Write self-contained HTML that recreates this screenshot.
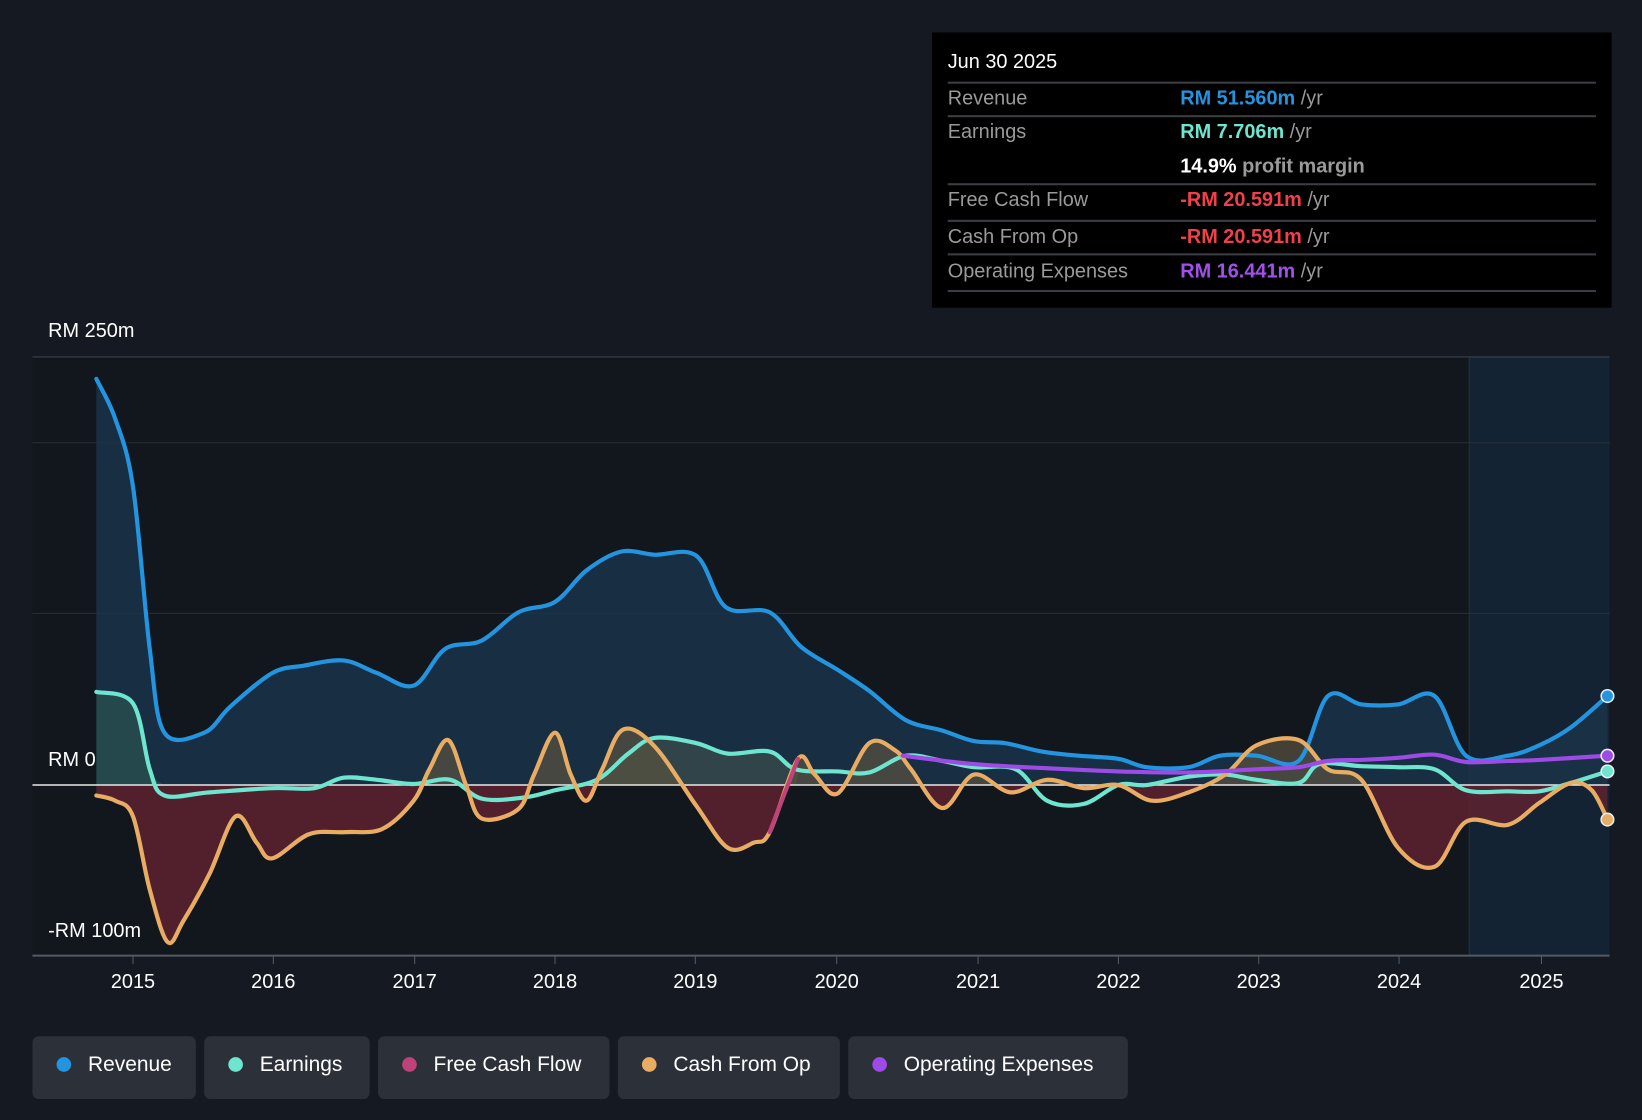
<!DOCTYPE html>
<html><head><meta charset="utf-8">
<style>
html,body{margin:0;padding:0;background:#151a22;width:1642px;height:1120px;overflow:hidden}
#w{position:absolute;left:0;top:0;width:1568px;height:1070px;transform:scale(1.0472,1.0467);transform-origin:0 0;font-family:"Liberation Sans",sans-serif;color:#fff}
.lbl{position:absolute;font-size:19px;color:#fff}
.tick{position:absolute;top:928px;font-size:19px;width:80px;text-align:center}
#tt{position:absolute;left:890px;top:31px;width:649px;height:263px;background:#000}
.r{position:absolute;left:15px;width:619px;font-size:19px;color:#9a9a9a}
.v{position:absolute;left:222px;top:0;color:#9a9a9a;white-space:nowrap}
.ln{position:absolute;left:15px;width:619px;height:2px;background:#3a3d42}
.pill{position:absolute;top:990px;height:60px;background:#2c3039;border-radius:6px;font-size:20px;line-height:54px}
.pill i{position:absolute;left:23px;top:20px;width:14px;height:14px;border-radius:50%}
.pill span{position:absolute;left:53px}
</style></head><body><div id="w">
<svg width="1568" height="1070" style="position:absolute;left:0;top:0">
<defs>
<clipPath id="above"><rect x="0" y="0" width="1568" height="750"/></clipPath>
<clipPath id="below"><rect x="0" y="750" width="1568" height="300"/></clipPath>
</defs>
<rect x="31" y="341" width="1506" height="572" fill="#12161d"/>
<rect x="1403" y="341" width="134" height="572" fill="#142333"/>
<line x1="1403" y1="341" x2="1403" y2="913" stroke="#22303e" stroke-width="1"/>
<line x1="31" y1="341" x2="1537" y2="341" stroke="#3b4048" stroke-width="1"/>
<line x1="31" y1="423" x2="1537" y2="423" stroke="#2a2f37" stroke-width="1"/>
<line x1="31" y1="586" x2="1537" y2="586" stroke="#2a2f37" stroke-width="1"/>
<path class="sf" fill="#1a3249" fill-opacity="0.85" data-p="92,362 110,400 127,465 143,620 157,700 195,700 220,675 260,643 290,636 328,631 360,643 395,655 425,620 460,612 495,585 530,575 560,545 593,527 625,530 665,531 693,580 735,585 765,618 800,640 830,660 865,688 900,698 930,708 960,710 995,718 1030,722 1068,725 1095,733 1135,733 1165,722 1200,722 1240,727 1268,665 1300,673 1335,673 1370,665 1400,722 1440,722 1470,712 1500,695 1535,665"/>
<path class="sf" fill="#2f5a55" fill-opacity="0.6" data-p="92,661 127,672 143,735 157,750"/>
<path class="sf" fill="#4a5a50" fill-opacity="0.5" data-p="570,750 600,720 625,705 665,710 695,720 735,718 760,735 760,750"/>
<g clip-path="url(#above)"><path class="sf" fill="#5a5340" fill-opacity="0.7" data-p="92,760 110,765 127,780 143,850 160,900 175,880 200,835 225,780 245,805 260,820 295,797 330,795 365,792 395,765 410,735 428,707 445,750 460,782 495,773 510,740 530,700 545,740 560,765 575,735 595,697 625,713 665,770 695,810 720,805 735,795 762,725 778,740 800,758 830,710 855,717 870,735 900,772 930,740 965,757 1000,745 1035,753 1068,750 1100,765 1135,757 1170,740 1200,712 1240,707 1268,735 1300,745 1335,810 1370,828 1400,785 1440,788 1470,767 1500,748 1520,755 1535,783"/></g>
<g clip-path="url(#below)"><path class="sf" fill="#5e2230" fill-opacity="0.85" data-p="92,760 110,765 127,780 143,850 160,900 175,880 200,835 225,780 245,805 260,820 295,797 330,795 365,792 395,765 410,735 428,707 445,750 460,782 495,773 510,740 530,700 545,740 560,765 575,735 595,697 625,713 665,770 695,810 720,805 735,795 762,725 778,740 800,758 830,710 855,717 870,735 900,772 930,740 965,757 1000,745 1035,753 1068,750 1100,765 1135,757 1170,740 1200,712 1240,707 1268,735 1300,745 1335,810 1370,828 1400,785 1440,788 1470,767 1500,748 1520,755 1535,783"/></g>
<line x1="31" y1="750" x2="1537" y2="750" stroke="#e8e8e8" stroke-width="1.5"/>
<line x1="31" y1="913" x2="1537" y2="913" stroke="#555a62" stroke-width="2"/>
<g stroke="#555a62" stroke-width="1">
<line x1="127" y1="913" x2="127" y2="921"/><line x1="261" y1="913" x2="261" y2="921"/><line x1="396" y1="913" x2="396" y2="921"/><line x1="530" y1="913" x2="530" y2="921"/><line x1="664" y1="913" x2="664" y2="921"/><line x1="799" y1="913" x2="799" y2="921"/><line x1="934" y1="913" x2="934" y2="921"/><line x1="1068" y1="913" x2="1068" y2="921"/><line x1="1202" y1="913" x2="1202" y2="921"/><line x1="1336" y1="913" x2="1336" y2="921"/><line x1="1472" y1="913" x2="1472" y2="921"/>
</g>
<g fill="none" stroke-width="4" stroke-linejoin="round" stroke-linecap="round">
<path class="s" stroke="#2394df" data-p="92,362 110,400 127,465 143,620 157,700 195,700 220,675 260,643 290,636 328,631 360,643 395,655 425,620 460,612 495,585 530,575 560,545 593,527 625,530 665,531 693,580 735,585 765,618 800,640 830,660 865,688 900,698 930,708 960,710 995,718 1030,722 1068,725 1095,733 1135,733 1165,722 1200,722 1240,727 1268,665 1300,673 1335,673 1370,665 1400,722 1440,722 1470,712 1500,695 1535,665"/>
<path class="s" stroke="#6ee5cf" data-p="92,661 127,672 143,735 157,760 200,757 260,753 300,753 328,743 360,745 395,749 430,745 460,763 500,762 530,755 570,745 600,720 625,705 665,710 695,720 735,718 760,735 800,737 830,738 865,722 900,727 930,733 970,735 1000,765 1035,768 1068,750 1095,750 1135,742 1170,740 1200,745 1240,748 1260,730 1300,732 1335,733 1370,735 1400,755 1440,756 1470,756 1500,748 1535,737"/>
<path class="s" stroke="#e8ad63" data-p="92,760 110,765 127,780 143,850 160,900 175,880 200,835 225,780 245,805 260,820 295,797 330,795 365,792 395,765 410,735 428,707 445,750 460,782 495,773 510,740 530,700 545,740 560,765 575,735 595,697 625,713 665,770 695,810 720,805 735,795 762,725 778,740 800,758 830,710 855,717 870,735 900,772 930,740 965,757 1000,745 1035,753 1068,750 1100,765 1135,757 1170,740 1200,712 1240,707 1268,735 1300,745 1335,810 1370,828 1400,785 1440,788 1470,767 1500,748 1520,755 1535,783"/>
<path stroke="#c0427a" d="M735,795 L762,725"/>
<path class="s" stroke="#9d4ae6" data-p="862,722 930,730 1000,734 1068,737 1135,738 1200,735 1240,733 1268,727 1300,726 1335,724 1370,721 1400,728 1440,727 1470,726 1535,722"/>
</g>
<g stroke="#e8eef5" stroke-width="1.5">
<circle cx="1535" cy="665" r="6" fill="#2394df"/>
<circle cx="1535" cy="722" r="6" fill="#9d4ae6"/>
<circle cx="1535" cy="737" r="6" fill="#6ee5cf"/>
<circle cx="1535" cy="783" r="6" fill="#e8ad63"/>
</g>
</svg>
<div class="lbl" style="left:46px;top:306px">RM 250m</div>
<div class="lbl" style="left:46px;top:716px">RM 0</div>
<div class="lbl" style="left:46px;top:879px">-RM 100m</div>
<div class="tick" style="left:87px">2015</div><div class="tick" style="left:221px">2016</div><div class="tick" style="left:356px">2017</div><div class="tick" style="left:490px">2018</div><div class="tick" style="left:624px">2019</div><div class="tick" style="left:759px">2020</div><div class="tick" style="left:894px">2021</div><div class="tick" style="left:1028px">2022</div><div class="tick" style="left:1162px">2023</div><div class="tick" style="left:1296px">2024</div><div class="tick" style="left:1432px">2025</div>
<div id="tt">
<div class="r" style="top:18px;color:#fff">Jun 30 2025</div>
<div class="ln" style="top:47px"></div>
<div class="r" style="top:53px">Revenue<div class="v"><b style="color:#2394df">RM 51.560m</b> /yr</div></div>
<div class="ln" style="top:79px"></div>
<div class="r" style="top:85px">Earnings<div class="v"><b style="color:#6ee5cf">RM 7.706m</b> /yr</div></div>
<div class="r" style="top:118px"><div class="v"><b style="color:#fff">14.9%</b> <b>profit margin</b></div></div>
<div class="ln" style="top:144px"></div>
<div class="r" style="top:150px">Free Cash Flow<div class="v"><b style="color:#f0404a">-RM 20.591m</b> /yr</div></div>
<div class="ln" style="top:179px"></div>
<div class="r" style="top:185px">Cash From Op<div class="v"><b style="color:#f0404a">-RM 20.591m</b> /yr</div></div>
<div class="ln" style="top:211px"></div>
<div class="r" style="top:218px">Operating Expenses<div class="v"><b style="color:#a150ea">RM 16.441m</b> /yr</div></div>
<div class="ln" style="top:246px"></div>
</div>
<div class="pill" style="left:31px;width:156px"><i style="background:#2394df"></i><span>Revenue</span></div>
<div class="pill" style="left:195px;width:158px"><i style="background:#6ee5cf"></i><span>Earnings</span></div>
<div class="pill" style="left:361px;width:221px"><i style="background:#c0427a"></i><span>Free Cash Flow</span></div>
<div class="pill" style="left:590px;width:212px"><i style="background:#e8ad63"></i><span>Cash From Op</span></div>
<div class="pill" style="left:810px;width:267px"><i style="background:#9d4ae6"></i><span>Operating Expenses</span></div>
</div>
<script>
function sm(pts){var d="M"+pts[0][0]+","+pts[0][1];for(var i=0;i<pts.length-1;i++){var p0=pts[i-1]||pts[i],p1=pts[i],p2=pts[i+1],p3=pts[i+2]||p2;var t=6;d+=" C"+(p1[0]+(p2[0]-p0[0])/t)+","+(p1[1]+(p2[1]-p0[1])/t)+" "+(p2[0]-(p3[0]-p1[0])/t)+","+(p2[1]-(p3[1]-p1[1])/t)+" "+p2[0]+","+p2[1];}return d;}
document.querySelectorAll("path[data-p]").forEach(function(e){var pts=e.getAttribute("data-p").trim().split(/\s+/).map(function(s){return s.split(",").map(Number)});var d=sm(pts);if(e.classList.contains("sf")){var f=pts[0],l=pts[pts.length-1];d="M"+f[0]+",750 L"+d.slice(1)+" L"+l[0]+",750 Z";}e.setAttribute("d",d);});
</script>
</body></html>
